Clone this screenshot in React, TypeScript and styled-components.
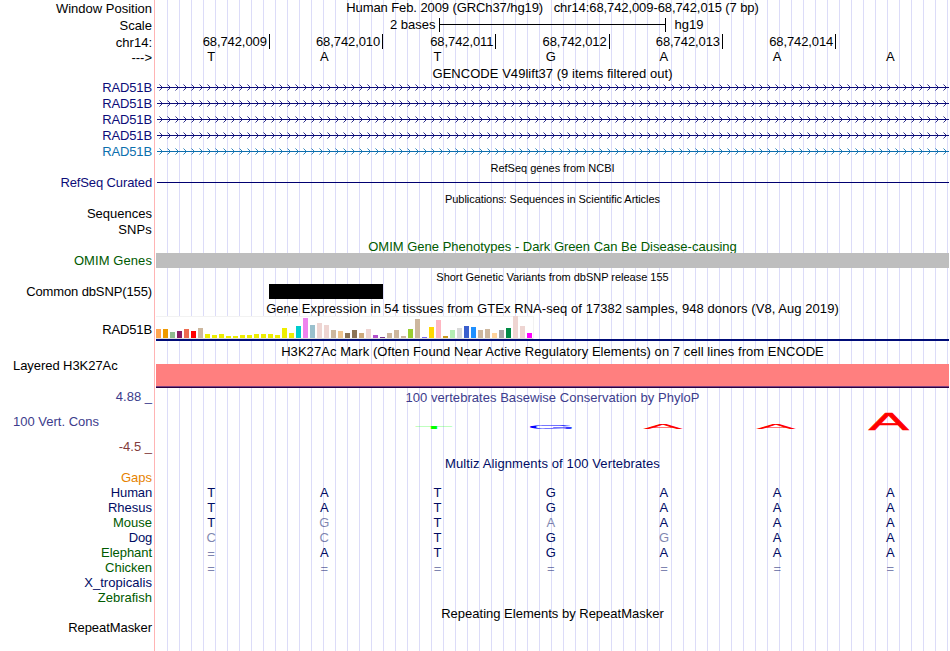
import React from 'react'
import styled, { createGlobalStyle } from 'styled-components'

const GlobalStyle = createGlobalStyle`
  body {
    margin: 0;
    background: #fff;
    overflow: hidden;
  }
`

const Browser = styled.div`
  width: 950px;
  height: 651px;
  font-family: 'Liberation Sans', Arial, Helvetica, sans-serif;
  font-size: 13px;
  line-height: 15px;
  white-space: pre;
  color: #000;
  background:
    linear-gradient(#ffb4b4, #ffb4b4) 154px 0 / 1px 100% no-repeat,
    repeating-linear-gradient(to right, #dcdcf8 0 1px, transparent 1px 12px) 167px 0 / 783px 100% no-repeat;
`

const Row = styled.div<{ $height: number }>`
  display: grid;
  grid-template-columns: 152px 793px;
  column-gap: 4px;
  height: ${(p) => p.$height}px;
`

const Label = styled.div<{ $color?: string; $top?: number; $left?: boolean; $spacing?: number }>`
  padding-top: ${(p) => p.$top || 0}px;
  padding-left: ${(p) => (p.$left ? 13 : 0)}px;
  text-align: ${(p) => (p.$left ? 'left' : 'right')};
  color: ${(p) => p.$color || '#000'};
  letter-spacing: ${(p) => p.$spacing || 0}px;
`

const Title = styled.div<{ $top?: number; $small?: boolean; $color?: string; $spacing?: number }>`
  padding-top: ${(p) => p.$top || 0}px;
  text-align: center;
  color: ${(p) => p.$color || '#000'};
  font-size: ${(p) => (p.$small ? 11 : 13)}px;
  line-height: ${(p) => (p.$small ? 12 : 15)}px;
  letter-spacing: ${(p) => p.$spacing || 0}px;
`

const ScaleBar = styled.div`
  display: flex;
  padding-left: 234px;
`

const Ruler = styled.div`
  width: 225px;
  height: 14px;
  margin: 1px 9px 0 3px;
  border: solid #000;
  border-width: 0 1px;
  background: linear-gradient(#000, #000) 0 6px / 100% 1px no-repeat;
`

const Positions = styled.div`
  display: grid;
  grid-template-columns: repeat(7, 1fr);
  margin: 0 -0.5px 0 0.5px;
`

const Position = styled.div`
  height: 15px;
  padding: 1px 2px 0 0;
  box-sizing: border-box;
  text-align: right;
  line-height: 14px;
  letter-spacing: -0.1px;
  border-right: 1px solid #000;
`

const Bases = styled.div<{ $color?: string }>`
  display: grid;
  grid-template-columns: repeat(7, 1fr);
  width: 792.5px;
  margin-left: -1.5px;
  text-align: center;
  color: ${(p) => p.$color || '#000'};
`

const Base = styled.span<{ $faded?: boolean; $drop?: boolean }>`
  padding-top: ${(p) => (p.$drop ? 1 : 0)}px;
  opacity: ${(p) => (p.$faded ? 0.5 : 1)};
`

const Line = styled.div`
  height: 1px;
  margin: 8px 0 0 1px;
  background: #000070;
`

const OmimBar = styled.div`
  background: #bebebe;
`

const Variant = styled.div`
  width: 114px;
  margin-left: 113px;
  background: #000;
`

const Expression = styled.div`
  border-bottom: 2px solid #000c78;
`

const Tissues = styled.div`
  display: flex;
  align-items: flex-end;
  gap: 2px;
  box-sizing: border-box;
  width: 378px;
  height: 23px;
  background: #fff;
  border: solid #f2f2f2;
  border-width: 1px 1px 0 0;
  box-shadow: inset 0 -1px #dcdcdc;
  padding-bottom: 1px;
`

const Tissue = styled.div<{ $color: string }>`
  flex: 0 0 5px;
  background: ${(p) => p.$color};
`

const Histone = styled.div`
  height: 22px;
  margin-top: 5px;
  background: #ff7f7f;
  border-bottom: 1px solid #7a3f80;
  box-shadow: 0 1px #2c0040;
`

const ConsLabels = styled.div`
  display: flex;
  flex-direction: column;
  gap: 10px;
  padding-top: 1px;
`

const Logo = styled.svg`
  display: block;
  width: 793px;
  height: 40px;
  font-size: 100px;
`

const Chevrons = styled.svg`
  display: block;
  width: 793px;
  height: 16px;
  shape-rendering: crispEdges;
`

const NAVY = '#0c0c78'
const SPECIES = '#000c64'
const GREEN = '#005a00'
const CONS = '#3c3c8c'

const positions = ['68,742,009', '68,742,010', '68,742,011', '68,742,012', '68,742,013', '68,742,014']

const genes = [NAVY, NAVY, NAVY, NAVY, '#0c6fae']

// [height, color] for each GTEx tissue
const tissues: [number, string][] = [
  [9, '#ffa54f'], [9, '#ee9a00'], [6, '#8fbc8f'], [7, '#8b1c62'], [9, '#ee6a50'], [7, '#ff0000'],
  [10, '#cdb79e'], [4, '#eeee00'], [3, '#eeee00'], [4, '#eeee00'], [2, '#eeee00'], [2, '#eeee00'],
  [3, '#eeee00'], [3, '#eeee00'], [4, '#eeee00'], [4, '#eeee00'], [4, '#eeee00'], [3, '#eeee00'],
  [10, '#eeee00'], [5, '#eeee00'], [12, '#00cdcd'], [20, '#ee82ee'], [13, '#9ac0cd'], [15, '#eed5d2'],
  [13, '#eed5d2'], [8, '#cdb79e'], [7, '#eec591'], [5, '#8b7355'], [8, '#8b7355'], [5, '#cdaa7d'],
  [9, '#eed5d2'], [3, '#b452cd'], [1, '#7a378b'], [5, '#cdb79e'], [8, '#cdb79e'], [2, '#cdb79e'],
  [9, '#9acd32'], [19, '#cdb79e'], [1, '#7a67ee'], [11, '#ffd700'], [18, '#ffb6c1'], [2, '#cd9b1d'],
  [8, '#b4eeb4'], [10, '#d9d9d9'], [12, '#3a5fcd'], [11, '#1e90ff'], [8, '#cdb79e'], [9, '#cdb79e'],
  [5, '#ffd39b'], [8, '#a6a6a6'], [10, '#008b45'], [22, '#eed5d2'], [12, '#eed5d2'], [5, '#ff00ff'],
]

// lower case marks a base that differs from human
const alignments = [
  { name: 'Gaps', color: '#e68200', bases: '' },
  { name: 'Human', color: SPECIES, bases: 'TATGAAA', spacing: -0.15 },
  { name: 'Rhesus', color: SPECIES, bases: 'TATGAAA' },
  { name: 'Mouse', color: GREEN, bases: 'TgTaAAA' },
  { name: 'Dog', color: SPECIES, bases: 'ccTGgAA', spacing: -0.2 },
  { name: 'Elephant', color: GREEN, bases: '=ATGAAA', spacing: -0.05 },
  { name: 'Chicken', color: GREEN, bases: '=======' },
  { name: 'X_tropicalis', color: SPECIES, bases: '', spacing: 0.05 },
  { name: 'Zebrafish', color: GREEN, bases: '' },
]

interface GeneProps {
  color: string
}

const Gene: React.FC<GeneProps> = ({ color }) => {
  const tips = Array.from({ length: 99 }, (_, i) => 6 + i * 8)
  return (
    <Row $height={16}>
      <Label $color={color} $spacing={-0.12}>RAD51B</Label>
      <Chevrons fill={color}>
        <rect x={1} y={7} width={792} height={1} />
        <path d={tips.map((x) => `M${x - 1} 6h1v1h-1zM${x - 1} 8h1v1h-1zM${x - 2} 5h1v1h-1zM${x - 2} 9h1v1h-1z`).join('')} opacity={0.85} />
        <path d={tips.map((x) => `M${x - 3} 4h1v1h-1zM${x - 3} 10h1v1h-1z`).join('')} opacity={0.45} />
      </Chevrons>
    </Row>
  )
}

const App: React.FC = () => {
  return (
    <Browser>
      <GlobalStyle />
      <Row $height={17}>
        <Label $top={1}>Window Position</Label>
        <Title $spacing={-0.09}>Human Feb. 2009 (GRCh37/hg19)   chr14:68,742,009-68,742,015 (7 bp)</Title>
      </Row>
      <Row $height={17}>
        <Label $top={1}>Scale</Label>
        <ScaleBar>
          2 bases
          <Ruler />
          hg19
        </ScaleBar>
      </Row>
      <Row $height={15}>
        <Label $top={1}>chr14:</Label>
        <Positions>
          {positions.map((p) => <Position key={p}>{p}</Position>)}
        </Positions>
      </Row>
      <Row $height={17}>
        <Label $top={1}>{'--->'}</Label>
        <Bases>
          {'TATGAAA'.split('').map((b, i) => <Base key={i}>{b}</Base>)}
        </Bases>
      </Row>
      <Row $height={14}>
        <Label />
        <Title $spacing={0.04}>GENCODE V49lift37 (9 items filtered out)</Title>
      </Row>
      {genes.map((color, i) => <Gene key={i} color={color} />)}
      <Row $height={14}>
        <Label />
        <Title $small $top={2}>RefSeq genes from NCBI</Title>
      </Row>
      <Row $height={17}>
        <Label $color={NAVY} $top={1} $spacing={-0.12}>RefSeq Curated</Label>
        <Line />
      </Row>
      <Row $height={15}>
        <Label />
        <Title $small $top={2} $spacing={-0.06}>Publications: Sequences in Scientific Articles</Title>
      </Row>
      <Row $height={16}>
        <Label>Sequences</Label>
      </Row>
      <Row $height={16}>
        <Label $spacing={0.15}>SNPs</Label>
      </Row>
      <Row $height={15}>
        <Label />
        <Title $top={1} $color={GREEN}>OMIM Gene Phenotypes - Dark Green Can Be Disease-causing</Title>
      </Row>
      <Row $height={15}>
        <Label $color={GREEN} $spacing={0.08}>OMIM Genes</Label>
        <OmimBar />
      </Row>
      <Row $height={16}>
        <Label />
        <Title $small $top={3} $spacing={-0.02}>Short Genetic Variants from dbSNP release 155</Title>
      </Row>
      <Row $height={15}>
        <Label $spacing={-0.12}>Common dbSNP(155)</Label>
        <Variant />
      </Row>
      <Row $height={17}>
        <Label />
        <Title $top={2} $spacing={0.06}>Gene Expression in 54 tissues from GTEx RNA-seq of 17382 samples, 948 donors (V8, Aug 2019)</Title>
      </Row>
      <Row $height={25}>
        <Label $top={6} $spacing={-0.12}>RAD51B</Label>
        <Expression>
          <Tissues>
            {tissues.map(([height, color], i) => <Tissue key={i} $color={color} style={{ height }} />)}
          </Tissues>
        </Expression>
      </Row>
      <Row $height={47}>
        <Label $left $top={17} $spacing={-0.06}>Layered H3K27Ac</Label>
        <div>
          <Title $top={3} $spacing={0.06}>H3K27Ac Mark (Often Found Near Active Regulatory Elements) on 7 cell lines from ENCODE</Title>
          <Histone />
        </div>
      </Row>
      <Row $height={68}>
        <ConsLabels>
          <Label $color={CONS}>4.88 _</Label>
          <Label $color={CONS} $left>100 Vert. Cons</Label>
          <Label $color="#823c3c">-4.5 _</Label>
        </ConsLabels>
        <div>
          <Title $top={2} $color={CONS} $spacing={0.04}>100 vertebrates Basewise Conservation by PhyloP</Title>
          <Logo>
            <text transform="translate(258 24) scale(0.65 0.03)" fill="#00ff00">T</text>
            <text transform="translate(370.5 24) scale(0.64 0.055)" fill="#0000ff">G</text>
            <text transform="translate(487 24) scale(0.6 0.07)" fill="#ff0000">A</text>
            <text transform="translate(600 24) scale(0.6 0.07)" fill="#ff0000">A</text>
            <text transform="translate(712.7 25) scale(0.6 0.247)" fill="#ff0000" stroke="#ff0000" strokeWidth={2}>A</text>
          </Logo>
        </div>
      </Row>
      <Row $height={14}>
        <Label />
        <Title $color={SPECIES} $spacing={0.11}>Multiz Alignments of 100 Vertebrates</Title>
      </Row>
      {alignments.map(({ name, color, bases, spacing }) => (
        <Row key={name} $height={15}>
          <Label $color={color} $spacing={spacing}>{name}</Label>
          <Bases $color={SPECIES}>
            {bases.split('').map((b, i) => (
              <Base key={i} $drop={b === '='} $faded={b === '=' || b !== b.toUpperCase()}>{b.toUpperCase()}</Base>
            ))}
          </Bases>
        </Row>
      ))}
      <Row $height={15}>
        <Label />
        <Title $top={1}>Repeating Elements by RepeatMasker</Title>
      </Row>
      <Row $height={15}>
        <Label $spacing={-0.06}>RepeatMasker</Label>
      </Row>
    </Browser>
  )
}

export default App
